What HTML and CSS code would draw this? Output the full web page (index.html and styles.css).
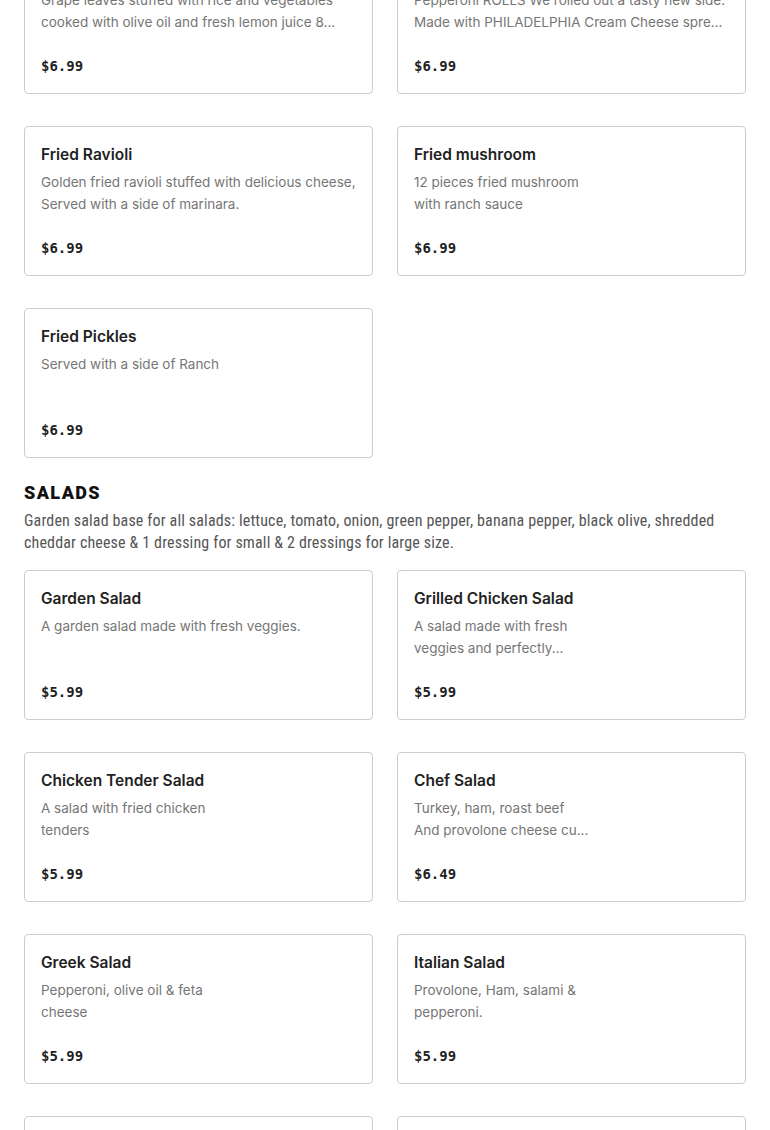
FILE: index.html
```html
<!DOCTYPE html>
<html lang="en">
<head>
<meta charset="utf-8">
<title>Menu</title>
<link rel="stylesheet" href="styles.css">
</head>
<body>
<main class="menu">
  <div class="grid">
    <div class="card">
      <div class="title">Grape Leaves</div>
      <div class="desc">Grape leaves stuffed with rice and vegetables<br>cooked with olive oil and fresh lemon juice 8...</div>
      <div class="price">$6.99</div>
    </div>
    <div class="card">
      <div class="title">Pepperoni Rolls</div>
      <div class="desc">Pepperoni ROLLS We rolled out a tasty new side.<br>Made with PHILADELPHIA Cream Cheese spre...</div>
      <div class="price">$6.99</div>
    </div>
    <div class="card">
      <div class="title">Fried Ravioli</div>
      <div class="desc">Golden fried ravioli stuffed with delicious cheese,<br>Served with a side of marinara.</div>
      <div class="price">$6.99</div>
    </div>
    <div class="card">
      <div class="title">Fried mushroom</div>
      <div class="desc">12 pieces fried mushroom<br>with ranch sauce</div>
      <div class="price">$6.99</div>
    </div>
    <div class="card">
      <div class="title">Fried Pickles</div>
      <div class="desc">Served with a side of Ranch</div>
      <div class="price">$6.99</div>
    </div>
  </div>

  <section class="section">
    <h2 class="section-title">SALADS</h2>
    <p class="section-desc">Garden salad base for all salads: lettuce, tomato, onion, green pepper, banana pepper, black olive, shredded cheddar cheese &amp; 1 dressing for small &amp; 2 dressings for large size.</p>
    <div class="grid">
      <div class="card">
        <div class="title">Garden Salad</div>
        <div class="desc">A garden salad made with fresh veggies.</div>
        <div class="price">$5.99</div>
      </div>
      <div class="card">
        <div class="title">Grilled Chicken Salad</div>
        <div class="desc">A salad made with fresh<br>veggies and perfectly...</div>
        <div class="price">$5.99</div>
      </div>
      <div class="card">
        <div class="title">Chicken Tender Salad</div>
        <div class="desc">A salad with fried chicken<br>tenders</div>
        <div class="price">$5.99</div>
      </div>
      <div class="card">
        <div class="title">Chef Salad</div>
        <div class="desc">Turkey, ham, roast beef<br>And provolone cheese cu...</div>
        <div class="price">$6.49</div>
      </div>
      <div class="card">
        <div class="title">Greek Salad</div>
        <div class="desc">Pepperoni, olive oil &amp; feta<br>cheese</div>
        <div class="price">$5.99</div>
      </div>
      <div class="card">
        <div class="title">Italian Salad</div>
        <div class="desc">Provolone, Ham, salami &amp;<br>pepperoni.</div>
        <div class="price">$5.99</div>
      </div>
      <div class="card">
        <div class="title">Antipasto Salad</div>
        <div class="desc">Ham, salami, pepperoni<br>and provolone cheese</div>
        <div class="price">$6.49</div>
      </div>
      <div class="card">
        <div class="title">Buffalo Chicken Salad</div>
        <div class="desc">A salad with buffalo<br>chicken tenders</div>
        <div class="price">$5.99</div>
      </div>
    </div>
  </section>
</main>
</body>
</html>
```

FILE: styles.css
```css
* { box-sizing: border-box; }
html, body { margin: 0; padding: 0; background: #fff; }
body { font-family: Inter, "Noto Sans", sans-serif; color: #2b2b2b; overflow: hidden; }
.menu { padding: 0 24px; margin-top: -56px; }
.grid {
  display: grid;
  grid-template-columns: minmax(0, 1fr) minmax(0, 1fr);
  column-gap: 24px;
  row-gap: 32px;
}
.card {
  height: 150px;
  border: 1px solid #cdcdcd;
  border-radius: 4px;
  padding: 16px;
  display: flex;
  flex-direction: column;
  background: #fff;
}
.title {
  font-size: 15.5px;
  font-weight: 600;
  line-height: 24px;
  color: #222;
}
.desc {
  margin-top: 4px;
  font-size: 13.5px;
  line-height: 22px;
  color: #767676;
  white-space: nowrap;
  overflow: hidden;
}
.price {
  margin-top: auto;
  font-family: "DejaVu Sans Mono", "Liberation Mono", monospace;
  font-weight: 700;
  font-size: 14px;
  line-height: 22px;
  color: #1f1f1f;
}
.section { margin-top: 23px; }
.section-title {
  margin: 0 0 5px;
  font-family: Roboto, "Liberation Sans", sans-serif;
  font-weight: 900;
  font-size: 18px;
  line-height: 24px;
  color: #111;
  letter-spacing: 1.4px;
}
.section-desc {
  margin: 0 0 16px;
  font-family: "Liberation Sans Narrow", "Roboto Condensed", "Liberation Sans", sans-serif;
  font-size: 16px;
  letter-spacing: 0.15px;
  line-height: 22px;
  color: #555;
}
```
